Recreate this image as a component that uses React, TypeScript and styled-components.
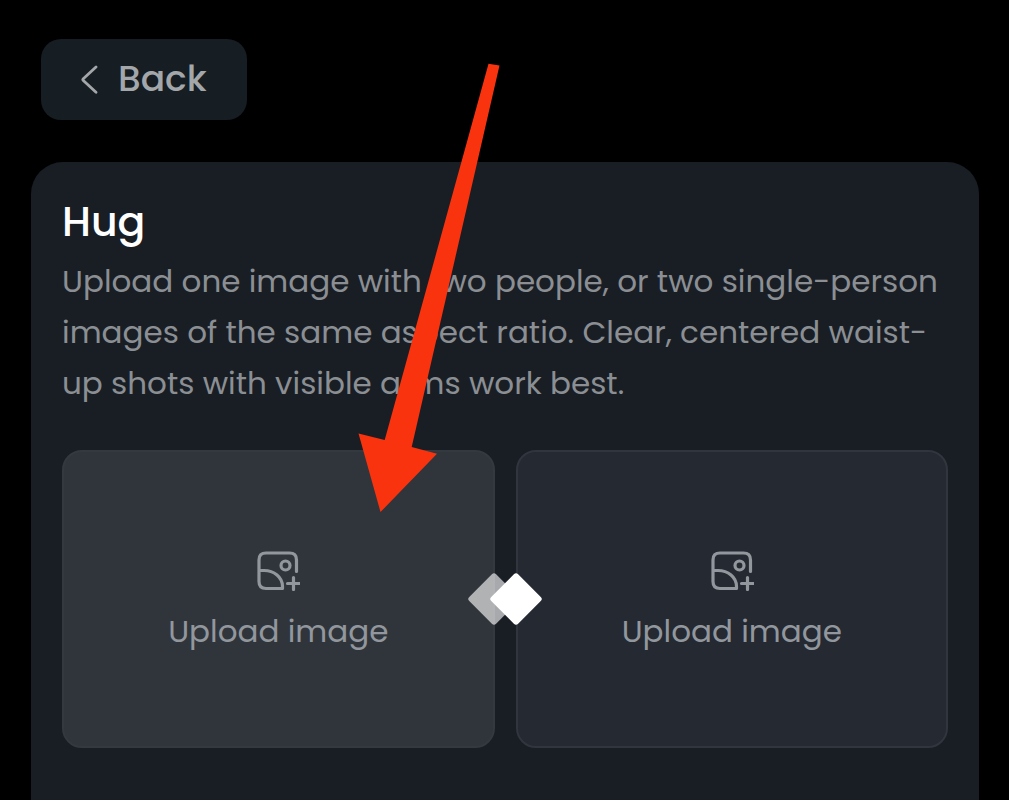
import React from "react";
import styled, { createGlobalStyle } from "styled-components";

const GlobalStyle = createGlobalStyle`
  *, *::before, *::after { box-sizing: border-box; }
  html, body { margin: 0; background: #000; }
  body {
    font-family: Poppins, Inter, "Open Sans", sans-serif;
    color: #8b8f93;
  }
`;

const Page = styled.div`
  position: relative;
  min-height: 100vh;
  display: flex;
  flex-direction: column;
  padding: 39px 30px 0 31px;
  overflow: hidden;
`;

const BackButton = styled.button`
  align-self: flex-start;
  display: flex;
  align-items: center;
  gap: 20px;
  margin: 0 10px 42px;
  padding: 13px 40px 14px 39px;
  border: 0;
  border-radius: 20px;
  background: #161d23;
  color: #a3a7aa;
  font: inherit;
  font-size: 36px;
  line-height: 54px;
  font-weight: 500;
  cursor: pointer;
`;

const Card = styled.main`
  flex: 1;
  padding: 30px 31px;
  border-radius: 32px 32px 0 0;
  background: #191e25;
`;

const Title = styled.h1`
  margin: 0;
  color: #fff;
  font-size: 41px;
  line-height: 60px;
  font-weight: 500;
`;

const Description = styled.p`
  margin: 4px 0 41px;
  font-size: 31px;
  line-height: 51px;
`;

const UploadRow = styled.div`
  position: relative;
  display: grid;
  grid-template-columns: 1fr 1fr;
  gap: 21px;
`;

const UploadTile = styled.button<{ $active?: boolean }>`
  display: flex;
  flex-direction: column;
  align-items: center;
  justify-content: center;
  gap: 16px;
  height: 298px;
  padding: 8px 0 0;
  border: 2px solid ${(p) => (p.$active ? "#343940" : "#31363e")};
  border-radius: 20px;
  background: ${(p) => (p.$active ? "#30353c" : "#242932")};
  color: #92979d;
  font: inherit;
  font-size: 31px;
  line-height: 48px;
  cursor: pointer;
`;

const Diamonds = styled.svg`
  position: absolute;
  top: 50%;
  left: 50%;
  transform: translate(-50%, -50%);
  pointer-events: none;
`;

const Arrow = styled.svg`
  position: absolute;
  top: 63px;
  left: 358px;
  pointer-events: none;
`;

const ChevronIcon = () => (
  <svg width="18" height="30" viewBox="0 0 18 30" fill="none" aria-hidden="true">
    <path d="M16 3 3.300 14.700q-.9.9 0 1.800L16 28.200" stroke="currentColor" strokeWidth="2.8" strokeLinecap="round" strokeLinejoin="round" />
  </svg>
);

const ImagePlusIcon = () => (
  <svg width="44" height="40" viewBox="0 0 44 40" fill="none" stroke="currentColor" strokeWidth="3.200" strokeLinecap="round" strokeLinejoin="round" aria-hidden="true">
    <path d="M40.500 20.500V9q0-7-7-7H10Q3 2 3 9v21.500q0 7 7 7h16.500V35.500C26.500 26 18 19.500 8 19.500H3" />
    <circle cx="29.500" cy="14.500" r="4.500" />
    <path d="M37.500 26.500v12M31.500 32.500h12" />
  </svg>
);

const uploads = [
  { id: "first", active: true },
  { id: "second", active: false },
];

export default function App() {
  return (
    <>
      <GlobalStyle />
      <Page>
        <BackButton type="button">
          <ChevronIcon />
          Back
        </BackButton>
        <Card>
          <Title>Hug</Title>
          <Description>
            Upload one image with two people, or two single-person images of the
            same aspect ratio. Clear, centered waist-up shots with visible arms
            work best.
          </Description>
          <UploadRow>
            {uploads.map((u) => (
              <UploadTile key={u.id} type="button" $active={u.active}>
                <ImagePlusIcon />
                Upload image
              </UploadTile>
            ))}
            <Diamonds width="76" height="56" viewBox="0 0 76 56" aria-hidden="true">
              <rect x="8" y="9" width="38" height="38" rx="3" fill="#fff" fillOpacity=".62" transform="rotate(45 27 28)" />
              <rect x="30" y="9" width="38" height="38" rx="3" fill="#fff" transform="rotate(45 49 28)" />
            </Diamonds>
          </UploadRow>
        </Card>
        <Arrow width="144" height="450" viewBox="0 0 144 450" aria-hidden="true">
          <path d="M130.500.8 141.500 2.500 53.700 384 79 390.700 22.500 449 .5 370.500 26.700 377Z" fill="#f8330e" />
        </Arrow>
      </Page>
    </>
  );
}
